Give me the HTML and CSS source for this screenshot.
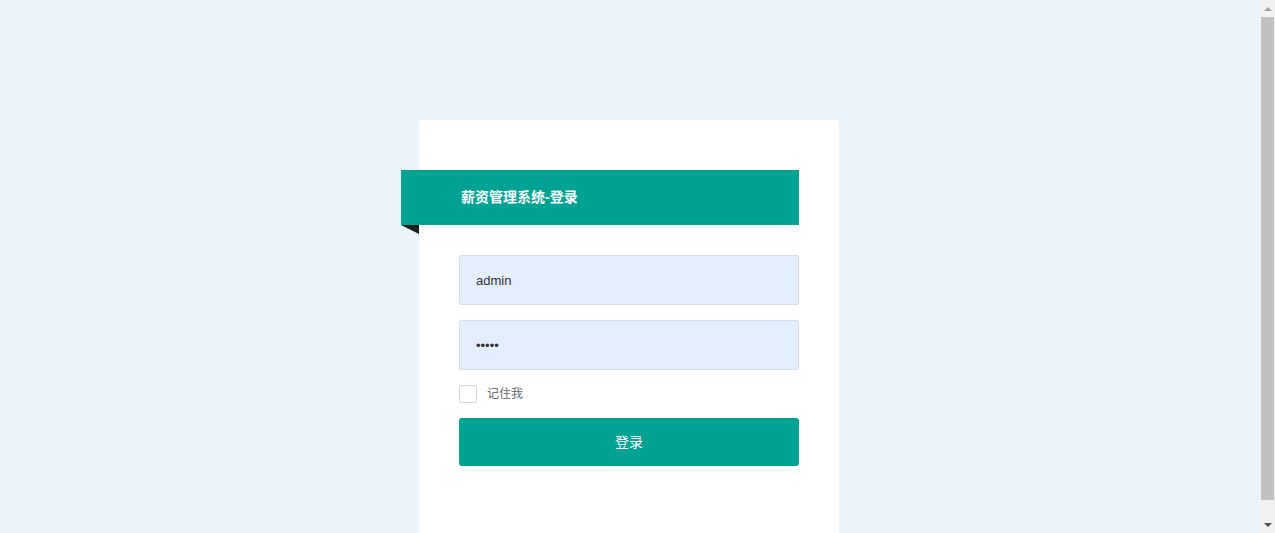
FILE: index.html
```html
<!DOCTYPE html>
<html lang="zh-CN">
<head>
  <meta charset="UTF-8">
  <title>薪资管理系统-登录</title>
  <link rel="stylesheet" href="styles.css">
</head>
<body>

<div class="login-box">
  <div class="login-title">薪资管理系统-登录</div>

  <form class="login-form" onsubmit="return false;">
    <input type="text" class="login-input" name="username" value="admin">
    <input type="password" class="login-input" name="password" value="admin">
    <label class="remember">
      <input type="checkbox" class="remember-check">
      <span>记住我</span>
    </label>
    <button type="submit" class="login-btn">登录</button>
  </form>
</div>

<!-- page scrollbar rail -->
<div class="scroll-rail">
  <span class="scroll-arrow up"></span>
  <span class="scroll-thumb"></span>
  <span class="scroll-arrow down"></span>
</div>

</body>
</html>
```

FILE: styles.css
```css
body {
  margin: 0;
  padding-right: 17px;
  background: #ecf4fa;
  font-family: "Liberation Sans", "Noto Sans CJK SC", sans-serif;
  color: #333;
}

.login-box {
  width: 340px;
  margin: 120px auto 0;
  padding: 50px 40px 85px;
  background: #fff;
  border-radius: 4px 4px 0 0;
}

.login-title {
  position: relative;
  margin-left: -58px;
  height: 55px;
  line-height: 55px;
  padding-left: 60px;
  background: #00a294;
  color: #fff;
  font-size: 14px;
  font-weight: bold;
}

/* folded corner under the ribbon */
.login-title::after {
  content: '';
  position: absolute;
  left: 0;
  bottom: -9px;
  border-top: 9px solid #1c1c1c;
  border-left: 18px solid transparent;
}

.login-form {
  display: flex;
  flex-direction: column;
  gap: 15px;
  margin-top: 30px;
}

.login-input {
  box-sizing: border-box;
  width: 100%;
  height: 50px;
  margin: 0;
  padding: 0 16px;
  background: #e3effc;
  border: 1px solid #d6dde5;
  border-radius: 2px;
  font-family: "Liberation Sans", "Noto Sans CJK SC", sans-serif;
  font-size: 13px;
  color: #333;
  outline: none;
}

.remember {
  display: flex;
  align-items: center;
  gap: 10px;
  height: 18px;
  font-size: 12px;
  color: #666;
}

.remember span {
  margin-top: -3px;
}

.remember-check {
  appearance: none;
  width: 18px;
  height: 18px;
  margin: 0;
  border: 1px solid #d2d2d2;
  border-radius: 2px;
  background: #fff;
}

.login-btn {
  height: 48px;
  padding: 0 0 3px;
  border: none;
  border-radius: 3px;
  background: #00a294;
  color: #fff;
  font-family: "Liberation Sans", "Noto Sans CJK SC", sans-serif;
  font-size: 14px;
  cursor: pointer;
}

.scroll-rail {
  position: fixed;
  top: 0;
  right: 0;
  bottom: 0;
  width: 15px;
  display: flex;
  flex-direction: column;
  align-items: center;
  background: #f1f1f1;
}

.scroll-arrow {
  flex: none;
  height: 17px;
  width: 15px;
  display: flex;
  justify-content: center;
  align-items: center;
}

.scroll-arrow::before {
  content: '';
  border-left: 4px solid transparent;
  border-right: 4px solid transparent;
}

.scroll-arrow.up::before {
  border-bottom: 4px solid #a3a3a3;
}

.scroll-arrow.down::before {
  border-top: 4px solid #505050;
}

.scroll-thumb {
  flex: 1;
  width: 13px;
  margin-bottom: 16px;
  background: #c1c1c1;
}
```
